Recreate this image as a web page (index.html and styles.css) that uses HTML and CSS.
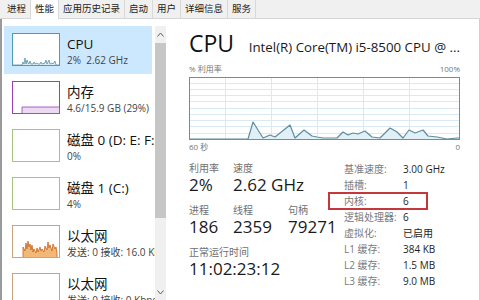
FILE: index.html
```html
<!DOCTYPE html>
<html lang="zh-CN">
<head>
<meta charset="utf-8">
<title>任务管理器 - 性能</title>
<link rel="stylesheet" href="styles.css">
</head>
<body>
<div class="window">
  <div class="tabs">
    <div class="tab">进程</div>
    <div class="tab active">性能</div>
    <div class="tab">应用历史记录</div>
    <div class="tab">启动</div>
    <div class="tab">用户</div>
    <div class="tab">详细信息</div>
    <div class="tab">服务</div>
  </div>
  <div class="body">
    <div class="sidebar">
      <div class="list">
        <div class="item selected">
          <svg class="thumb" width="48" height="33" viewBox="0 0 48 33">
            <rect x="0.5" y="0.5" width="47" height="32" fill="#fff" stroke="#4f9bb3"/>
            <polyline points="1,32 10,32 11,29 12,31 13,25 14,31 15,27 16,30 17,31 18,28 19,31 21,31 22,29 23,31 25,30 26,31 28,31 29,29 30,31 33,30 34,27 35,31 37,27 38,31 40,30 41,31 43,28 44,32 47,32" fill="#dcedf5" stroke="#5a93a6" stroke-width="0.8"/>
          </svg>
          <div class="info"><div class="title">CPU</div><div class="detail">2%&nbsp; 2.62 GHz</div></div>
        </div>
        <div class="item">
          <svg class="thumb" width="48" height="33" viewBox="0 0 48 33">
            <rect x="0.5" y="0.5" width="47" height="32" fill="#fff" stroke="#9b3fb8"/>
            <polygon points="10,32.5 10,26 47.5,26 47.5,32.5" fill="#ecd9f2" stroke="#9b3fb8" stroke-width="0.8"/>
          </svg>
          <div class="info"><div class="title">内存</div><div class="detail">4.6/15.9 GB (29%)</div></div>
        </div>
        <div class="item">
          <svg class="thumb" width="48" height="33" viewBox="0 0 48 33">
            <rect x="0.5" y="0.5" width="47" height="32" fill="#fff" stroke="#a3c47e"/>
          </svg>
          <div class="info"><div class="title">磁盘 0 (D: E: F:)</div><div class="detail">0%</div></div>
        </div>
        <div class="item">
          <svg class="thumb" width="48" height="33" viewBox="0 0 48 33">
            <rect x="0.5" y="0.5" width="47" height="32" fill="#fff" stroke="#a3c47e"/>
          </svg>
          <div class="info"><div class="title">磁盘 1 (C:)</div><div class="detail">4%</div></div>
        </div>
        <div class="item">
          <svg class="thumb" width="48" height="33" viewBox="0 0 48 33">
            <rect x="0.5" y="0.5" width="47" height="32" fill="#fff" stroke="#c9a47f"/>
            <polyline points="11,32 11,22 13,26 14,18 15,24 16,16 17,22 18,19 19,25 20,20 21,27 22,24 24,28 25,23 26,27 28,22 29,26 30,24 32,27 33,21 35,25 36,17 37,23 38,20 40,26 41,19 43,24 44,22 45,28 45,32" fill="#f2b878" stroke="#c8631a" stroke-width="0.8"/>
          </svg>
          <div class="info"><div class="title">以太网</div><div class="detail">发送: 0 接收: 16.0 Kbps</div></div>
        </div>
        <div class="item">
          <svg class="thumb" width="48" height="33" viewBox="0 0 48 33">
            <rect x="0.5" y="0.5" width="47" height="32" fill="#fff" stroke="#c9a47f"/>
          </svg>
          <div class="info"><div class="title">以太网</div><div class="detail">发送: 0 接收: 0 Kbps</div></div>
        </div>
      </div>
      <div class="scrollbar">
        <div class="arrow">
          <svg width="7" height="5" viewBox="0 0 7 5"><polyline points="0.5,4.5 3.5,1 6.5,4.5" fill="none" stroke="#606060" stroke-width="1"/></svg>
        </div>
        <div class="thumbbar"></div>
        <div class="track"></div>
        <div class="arrow down">
          <svg width="7" height="5" viewBox="0 0 7 5"><polyline points="0.5,0.5 3.5,4 6.5,0.5" fill="none" stroke="#606060" stroke-width="1"/></svg>
        </div>
      </div>
    </div>
    <div class="main">
      <div class="head">
        <div class="big">CPU</div>
        <div class="model">Intel(R) Core(TM) i5-8500 CPU @ ...</div>
      </div>
      <div class="axis top"><span>% 利用率</span><span>100%</span></div>
      <svg class="graph" width="271" height="63" viewBox="0 0 271 63">
        <rect x="0.5" y="0.5" width="270" height="62" fill="#fff"/>
        <g stroke="#d9eaf3" stroke-width="1">
          <line x1="0" y1="6.5" x2="271" y2="6.5"/>
          <line x1="0" y1="12.5" x2="271" y2="12.5"/>
          <line x1="0" y1="18.5" x2="271" y2="18.5"/>
          <line x1="0" y1="24.5" x2="271" y2="24.5"/>
          <line x1="0" y1="31.5" x2="271" y2="31.5"/>
          <line x1="0" y1="37.5" x2="271" y2="37.5"/>
          <line x1="0" y1="43.5" x2="271" y2="43.5"/>
          <line x1="0" y1="49.5" x2="271" y2="49.5"/>
          <line x1="0" y1="56.5" x2="271" y2="56.5"/>
          <line x1="36.5" y1="0" x2="36.5" y2="63"/>
          <line x1="82.5" y1="0" x2="82.5" y2="63"/>
          <line x1="128.5" y1="0" x2="128.5" y2="63"/>
          <line x1="174.5" y1="0" x2="174.5" y2="63"/>
          <line x1="220.5" y1="0" x2="220.5" y2="63"/>
        </g>
        <polyline points="0,62 59,62 64,45 74,61 81,58 86,60 101,48 106,61 115,53 123,59 128,60 134,61 148,61 154,55 159,58 164,56 169,57 176,54 183,60 191,61 201,51 208,55 214,61 220,53 226,56 234,53 239,59 248,60 258,62 268,61 271,61 271,62" fill="#e1f0f7" stroke="#5c8e9e" stroke-width="1.2" stroke-linejoin="round"/>
        <rect x="0.5" y="0.5" width="270" height="62" fill="none" stroke="#4f9bb3"/>
      </svg>
      <div class="axis bottom"><span>60 秒</span><span>0</span></div>
      <div class="stats">
        <div class="dyn">
          <div class="srow">
            <div class="stat c1"><div class="label">利用率</div><div class="value">2%</div></div>
            <div class="stat"><div class="label">速度</div><div class="value">2.62 GHz</div></div>
          </div>
          <div class="srow">
            <div class="stat c1"><div class="label">进程</div><div class="value">186</div></div>
            <div class="stat c2"><div class="label">线程</div><div class="value">2359</div></div>
            <div class="stat"><div class="label">句柄</div><div class="value">79271</div></div>
          </div>
          <div class="srow">
            <div class="stat"><div class="label">正常运行时间</div><div class="value">11:02:23:12</div></div>
          </div>
        </div>
        <div class="specs">
          <div class="k">基准速度:</div><div class="v">3.00 GHz</div>
          <div class="k">插槽:</div><div class="v">1</div>
          <div class="k">内核:</div><div class="v">6</div>
          <div class="k">逻辑处理器:</div><div class="v">6</div>
          <div class="k">虚拟化:</div><div class="v">已启用</div>
          <div class="k">L1 缓存:</div><div class="v">384 KB</div>
          <div class="k">L2 缓存:</div><div class="v">1.5 MB</div>
          <div class="k">L3 缓存:</div><div class="v">9.0 MB</div>
          <div class="mark"></div>
        </div>
      </div>
    </div>
  </div>
</div>
</body>
</html>
```
FILE: styles.css
```css
* { box-sizing: border-box; }

body {
  margin: 0;
  width: 480px;
  height: 300px;
  overflow: hidden;
  background: #fff;
  font-family: "Open Sans", "Noto Sans CJK SC", sans-serif;
  color: #1a1a1a;
}

.window {
  display: flex;
  flex-direction: column;
  height: 300px;
}

/* tabs */
.tabs {
  display: flex;
  height: 19px;
  padding-left: 3px;
  background: #f0f0f0;
  border-bottom: 1px solid #d6d6d6;
  flex: none;
}
.tab {
  padding: 0 4px;
  font-size: 9.5px;
  line-height: 18px;
  color: #222;
  border-right: 1px solid #d9d9d9;
  white-space: nowrap;
}
.tab.active {
  background: #fff;
  height: 19px;
}

/* body */
.body {
  flex: 1;
  display: flex;
  border-left: 2px solid #9a9a9a;
  border-right: 1px solid #d0d0d0;
  min-height: 0;
}

.sidebar {
  width: 166px;
  flex: none;
  display: flex;
}
.list {
  width: 153px;
  overflow: hidden;
  padding-top: 7px;
}
.item {
  display: flex;
  width: 148px;
  height: 48px;
  margin-left: 2px;
  padding: 7px 0 0 8px;
  white-space: nowrap;
}
.item.selected {
  background: #cce8ff;
}
.thumb {
  flex: none;
  display: block;
}
.info {
  flex: none;
  margin-left: 7px;
  padding-top: 2px;
}
.title {
  font-size: 13.5px;
  line-height: 19px;
  color: #111;
}
.detail {
  font-size: 10px;
  line-height: 13px;
  color: #444;
}

.scrollbar {
  width: 11px;
  margin-top: 7px;
  display: flex;
  flex-direction: column;
  background: #f0f0f0;
}
.arrow {
  height: 16px;
  display: flex;
  align-items: center;
  justify-content: center;
  flex: none;
}
.arrow.down {
  height: 10px;
  align-items: flex-start;
}
.thumbbar {
  height: 175px;
  margin: 1px 0 0;
  background: #c6c6c6;
  flex: none;
}
.track {
  flex: 1;
}

/* main */
.main {
  flex: 1;
  padding: 10px 19px 0 21px;
  min-width: 0;
}
.head {
  display: flex;
  justify-content: space-between;
  align-items: baseline;
  white-space: nowrap;
}
.big {
  font-size: 23px;
  line-height: 28px;
  color: #111;
}
.model {
  font-size: 13.3px;
  color: #1a1a1a;
}
.axis {
  display: flex;
  justify-content: space-between;
  font-size: 8px;
  line-height: 11px;
  color: #777;
}
.axis.top {
  margin-top: 6px;
  margin-bottom: 3px;
}
.axis.bottom {
  margin-top: 1px;
  line-height: 12px;
}
.graph {
  display: block;
}

.stats {
  display: flex;
  margin-top: 9px;
}
.dyn {
  width: 155px;
  flex: none;
}
.srow {
  display: flex;
  white-space: nowrap;
  margin-bottom: 9px;
}
.c1 { width: 44px; flex: none; }
.c2 { width: 55px; flex: none; }
.label {
  font-size: 10px;
  line-height: 13px;
  color: #707070;
}
.value {
  font-size: 17px;
  line-height: 20px;
  color: #1a1a1a;
}

.specs {
  position: relative;
  display: grid;
  grid-template-columns: 59px auto;
  font-size: 10px;
  line-height: 16px;
  margin-top: -1.5px;
  align-self: flex-start;
  white-space: nowrap;
}
.k { color: #7a7a7a; }
.v { color: #1e1e1e; }
.mark {
  position: absolute;
  left: -16px;
  top: 31px;
  width: 100px;
  height: 18px;
  border: 2px solid #c4383b;
}
```
